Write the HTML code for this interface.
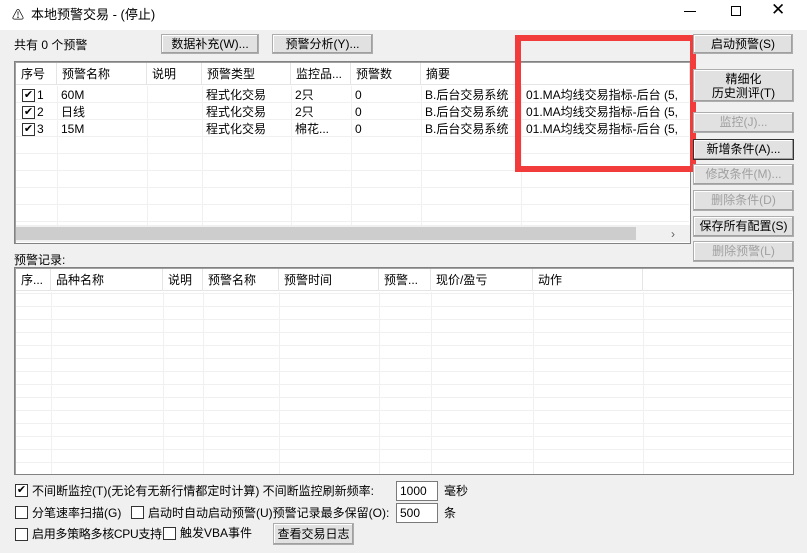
<!DOCTYPE html><html><head><meta charset="utf-8"><style>
*{box-sizing:border-box;margin:0;padding:0}
body{width:807px;height:553px;background:#f0f0f0;font:12px "Liberation Sans","Noto Sans CJK SC",sans-serif;line-height:14px;color:#000;position:relative;overflow:hidden}
.a{position:absolute;white-space:nowrap;line-height:14px}
.btn{position:absolute;background:#e1e1e1;border:1px solid #adadad;box-shadow:inset -1px -1px 0 #a0a0a0,inset 1px 1px 0 #fff;text-align:center;line-height:18px}
.dis{color:#a0a0a0}
.list{position:absolute;background:#fff;border:1px solid #828282;box-shadow:inset 1px 1px 0 #a0a0a0}
.hd{position:absolute;top:1px;height:22px;line-height:22px;padding-left:5px;border-right:1px solid #e5e5e5;border-bottom:1px solid #e5e5e5;background:#fff}
.hl{position:absolute;left:1px;right:1px;height:1px;background:#f0f0f0}
.vl{position:absolute;width:1px;background:#f0f0f0}
.cb{position:absolute;width:13px;height:13px;border:1px solid #333;background:#fff;font-size:11px;line-height:11px;text-align:center}
</style></head><body>
<div class="a" style="left:0;top:0;width:807px;height:30px;background:#fff"></div>
<div class="a" style="left:12px;top:8px;font-size:12px">⚠</div>
<div class="a" style="left:31px;top:8px;font-size:13px">本地预警交易 - (停止)</div>
<div class="a" style="left:684px;top:11px;width:12px;height:1px;background:#000"></div>
<div class="a" style="left:731px;top:6px;width:10px;height:10px;border:1px solid #000"></div>
<div class="a" style="left:771px;top:3px;font-size:17px;font-weight:100">✕</div>
<div class="a" style="left:14px;top:38px">共有 0 个预警</div>
<div class="btn" style="left:161px;top:34px;width:98px;height:20px">数据补充(W)...</div>
<div class="btn" style="left:272px;top:34px;width:101px;height:20px">预警分析(Y)...</div>
<div class="list" style="left:14px;top:61px;width:677px;height:183px">
<div class="hl" style="top:40px"></div><div class="hl" style="top:57px"></div><div class="hl" style="top:74px"></div><div class="hl" style="top:91px"></div><div class="hl" style="top:108px"></div><div class="hl" style="top:125px"></div><div class="hl" style="top:142px"></div><div class="hl" style="top:159px"></div>
<div class="vl" style="left:42px;top:24px;height:140px"></div><div class="vl" style="left:132px;top:24px;height:140px"></div><div class="vl" style="left:187px;top:24px;height:140px"></div><div class="vl" style="left:276px;top:24px;height:140px"></div><div class="vl" style="left:336px;top:24px;height:140px"></div><div class="vl" style="left:406px;top:24px;height:140px"></div><div class="vl" style="left:506px;top:24px;height:140px"></div>
<div class="hd" style="left:1px;width:41px">序号</div>
<div class="hd" style="left:42px;width:90px">预警名称</div>
<div class="hd" style="left:132px;width:55px">说明</div>
<div class="hd" style="left:187px;width:89px">预警类型</div>
<div class="hd" style="left:276px;width:60px">监控品...</div>
<div class="hd" style="left:336px;width:70px">预警数</div>
<div class="hd" style="left:406px;width:100px">摘要</div>
<div class="hd" style="left:506px;width:169px"></div>
<div class="a" style="left:1px;top:163px;width:674px;height:17px;background:#f0f0f0"></div>
<div class="a" style="left:1px;top:165px;width:620px;height:13px;background:#cdcdcd"></div>
<div class="a" style="left:656px;top:165px;color:#606060">›</div>
</div>
<div class="cb" style="left:22px;top:89px">✔</div><div class="a" style="left:37px;top:88px">1</div>
<div class="cb" style="left:22px;top:106px">✔</div><div class="a" style="left:37px;top:105px">2</div>
<div class="cb" style="left:22px;top:123px">✔</div><div class="a" style="left:37px;top:122px">3</div>
<div class="a" style="left:61px;top:88px">60M</div><div class="a" style="left:61px;top:105px">日线</div><div class="a" style="left:61px;top:122px">15M</div>
<div class="a" style="left:206px;top:88px">程式化交易</div><div class="a" style="left:206px;top:105px">程式化交易</div><div class="a" style="left:206px;top:122px">程式化交易</div>
<div class="a" style="left:295px;top:88px">2只</div><div class="a" style="left:295px;top:105px">2只</div><div class="a" style="left:295px;top:122px">棉花...</div>
<div class="a" style="left:355px;top:88px">0</div><div class="a" style="left:355px;top:105px">0</div><div class="a" style="left:355px;top:122px">0</div>
<div class="a" style="left:425px;top:88px">B.后台交易系统</div><div class="a" style="left:425px;top:105px">B.后台交易系统</div><div class="a" style="left:425px;top:122px">B.后台交易系统</div>
<div class="a" style="left:526px;top:88px">01.MA均线交易指标-后台 (5,</div><div class="a" style="left:526px;top:105px">01.MA均线交易指标-后台 (5,</div><div class="a" style="left:526px;top:122px">01.MA均线交易指标-后台 (5,</div>
<div class="a" style="left:515px;top:35px;width:181px;height:137px;border:6px solid #f23c3c"></div>
<div class="btn" style="left:693px;top:34px;width:100px;height:20px">启动预警(S)</div>
<div class="btn" style="left:693px;top:69px;width:101px;height:33px;line-height:14px;padding-top:2px">精细化<br>历史测评(T)</div>
<div class="btn dis" style="left:693px;top:112px;width:101px;height:21px">监控(J)...</div>
<div class="btn" style="left:693px;top:139px;width:101px;height:21px;border-color:#333">新增条件(A)...</div>
<div class="btn dis" style="left:693px;top:164px;width:101px;height:21px">修改条件(M)...</div>
<div class="btn dis" style="left:693px;top:190px;width:101px;height:21px">删除条件(D)</div>
<div class="btn" style="left:693px;top:216px;width:101px;height:21px">保存所有配置(S)</div>
<div class="btn dis" style="left:693px;top:241px;width:101px;height:21px">删除预警(L)</div>
<div class="a" style="left:14px;top:253px">预警记录:</div>
<div class="list" style="left:14px;top:267px;width:780px;height:208px">
<div class="hl" style="top:25px"></div><div class="hl" style="top:38px"></div><div class="hl" style="top:51px"></div><div class="hl" style="top:64px"></div><div class="hl" style="top:77px"></div><div class="hl" style="top:90px"></div><div class="hl" style="top:103px"></div><div class="hl" style="top:116px"></div><div class="hl" style="top:129px"></div><div class="hl" style="top:142px"></div><div class="hl" style="top:155px"></div><div class="hl" style="top:168px"></div><div class="hl" style="top:181px"></div><div class="hl" style="top:194px"></div>
<div class="vl" style="left:36px;top:24px;height:182px"></div><div class="vl" style="left:148px;top:24px;height:182px"></div><div class="vl" style="left:188px;top:24px;height:182px"></div><div class="vl" style="left:264px;top:24px;height:182px"></div><div class="vl" style="left:364px;top:24px;height:182px"></div><div class="vl" style="left:416px;top:24px;height:182px"></div><div class="vl" style="left:518px;top:24px;height:182px"></div><div class="vl" style="left:628px;top:24px;height:182px"></div>
<div class="hd" style="left:1px;width:35px">序...</div>
<div class="hd" style="left:36px;width:112px">品种名称</div>
<div class="hd" style="left:148px;width:40px">说明</div>
<div class="hd" style="left:188px;width:76px">预警名称</div>
<div class="hd" style="left:264px;width:100px">预警时间</div>
<div class="hd" style="left:364px;width:52px">预警...</div>
<div class="hd" style="left:416px;width:102px">现价/盈亏</div>
<div class="hd" style="left:518px;width:110px">动作</div>
<div class="hd" style="left:628px;width:150px"></div>
</div>
<div class="cb" style="left:15px;top:484px">✔</div><div class="a" style="left:32px;top:484px">不间断监控(T)(无论有无新行情都定时计算) 不间断监控刷新频率:</div>
<div class="a" style="left:396px;top:481px;width:42px;height:20px;background:#fff;border:1px solid #7a7a7a;padding:2px 3px">1000</div>
<div class="a" style="left:444px;top:484px">毫秒</div>
<div class="cb" style="left:15px;top:506px"></div><div class="a" style="left:32px;top:506px">分笔速率扫描(G)</div>
<div class="cb" style="left:131px;top:506px"></div><div class="a" style="left:148px;top:506px">启动时自动启动预警(U)预警记录最多保留(O):</div>
<div class="a" style="left:396px;top:503px;width:42px;height:20px;background:#fff;border:1px solid #7a7a7a;padding:2px 3px">500</div>
<div class="a" style="left:444px;top:506px">条</div>
<div class="cb" style="left:15px;top:528px"></div><div class="a" style="left:32px;top:527px;letter-spacing:-0.3px">启用多策略多核CPU支持</div>
<div class="cb" style="left:163px;top:527px"></div><div class="a" style="left:180px;top:526px">触发VBA事件</div>
<div class="btn" style="left:273px;top:523px;width:81px;height:22px;line-height:20px">查看交易日志</div>
</body></html>
